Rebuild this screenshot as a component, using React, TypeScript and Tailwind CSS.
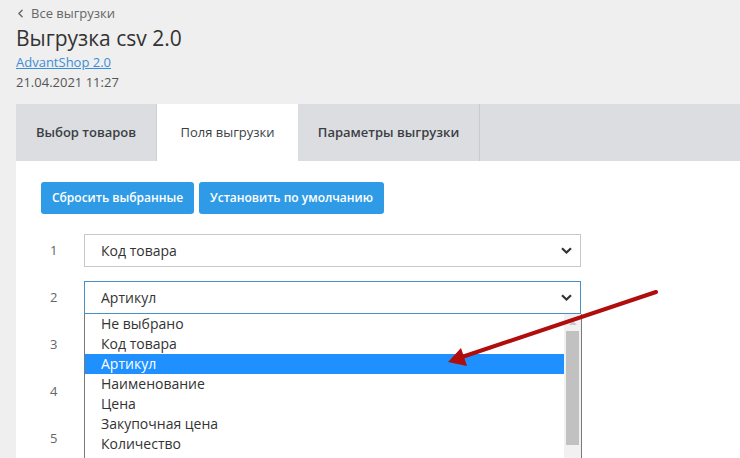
import { ChevronLeft } from "lucide-react";

const fields = ["Код товара", "Артикул", "", "", ""];

const options = [
  "Не выбрано",
  "Код товара",
  "Артикул",
  "Наименование",
  "Цена",
  "Закупочная цена",
  "Количество",
];

function SelectChevron() {
  return (
    <svg width="11" height="7" viewBox="0 0 11 7" className="shrink-0">
      <polyline points="1,1.2 5.5,5.5 10,1.2" fill="none" stroke="#333" strokeWidth="2.2" />
    </svg>
  );
}

function Dropdown() {
  return (
    <div className="absolute left-0 top-full z-10 flex h-[150px] w-[498px] border-x border-x-[#7a7a7a] bg-white">
      <ul className="flex-1">
        {options.map((opt) => (
          <li
            key={opt}
            className={
              "h-5 pl-4 text-[14px] leading-5 " +
              (opt === "Артикул" ? "bg-[#1e90ff] text-white" : "text-[#333]")
            }
          >
            {opt}
          </li>
        ))}
      </ul>
      {/* scrollbar */}
      <div className="flex w-[17px] flex-col items-center bg-[#f1f1f1]">
        <div className="flex h-[17px] items-center justify-center">
          <div className="h-0 w-0 border-x-[4px] border-b-[4px] border-x-transparent border-b-[#c8c8c8]" />
        </div>
        <div className="h-[114px] w-[13px] bg-[#c1c1c1]" />
      </div>
    </div>
  );
}

export default function App() {
  return (
    <div className="relative h-[458px] w-[740px] overflow-hidden bg-[#efefef] font-['Open_Sans',sans-serif]">
      <header className="px-4 pt-1">
        <a className="flex h-[18px] items-center gap-[4px] text-[13px] leading-[18px] text-[#666]">
          <ChevronLeft size={13} strokeWidth={2.5} className="-ml-[2px]" />
          Все выгрузки
        </a>
        <h1 className="mt-[2px] text-[21px] leading-[28px] text-[#333]">Выгрузка csv 2.0</h1>
        <a className="mt-px block text-[13px] leading-[18px] text-[#3c8dd6] underline">AdvantShop 2.0</a>
        <div className="mt-[2px] text-[13px] leading-[18px] text-[#555]">21.04.2021 11:27</div>
      </header>

      <section className="ml-4 mt-[13px]">
        <nav className="flex h-[57px] bg-[#dcdde0] text-[13px] text-[#3b3f45]">
          <div className="flex w-[141px] items-center justify-center border-r border-[#cfd0d3] font-semibold">
            Выбор товаров
          </div>
          <div className="flex w-[141px] items-center justify-center bg-white">Поля выгрузки</div>
          <div className="flex w-[182px] items-center justify-center border-r border-[#c9cacd] font-semibold">
            Параметры выгрузки
          </div>
        </nav>

        <div className="h-[300px] bg-white px-[25px] pt-[21px]">
          <div className="flex gap-[5px]">
            <button className="h-8 w-[153px] rounded-[3px] bg-[#2f9be6] text-[12px] font-semibold text-white">
              Сбросить выбранные
            </button>
            <button className="h-8 w-[185px] rounded-[3px] bg-[#2f9be6] text-[12px] font-semibold text-white">
              Установить по умолчанию
            </button>
          </div>

          <div className="mt-5">
            {fields.map((value, i) => (
              <div key={i} className="mb-[14px] flex h-[33px] items-center">
                <span className="w-[43px] pl-[9px] text-[13px] text-[#666]">{i + 1}</span>
                <div className="relative">
                  <div
                    className={
                      "flex h-[33px] w-[497px] items-center justify-between border pl-4 pr-[8px] text-[14px] text-[#333] " +
                      (i === 1 ? "border-[#4a8fc4]" : "border-[#c8c8c8]")
                    }
                  >
                    <span>{value}</span>
                    <SelectChevron />
                  </div>
                  {i === 1 && <Dropdown />}
                </div>
              </div>
            ))}
          </div>
        </div>
      </section>

      {/* red pointer */}
      <svg className="pointer-events-none absolute inset-0 z-20" width="740" height="458">
        <line x1="656" y1="292" x2="462" y2="357" stroke="#b00d0d" strokeWidth="4" strokeLinecap="round" />
        <polygon points="448,362 461,348 464,357 467,366" fill="#b00d0d" />
      </svg>
    </div>
  );
}
